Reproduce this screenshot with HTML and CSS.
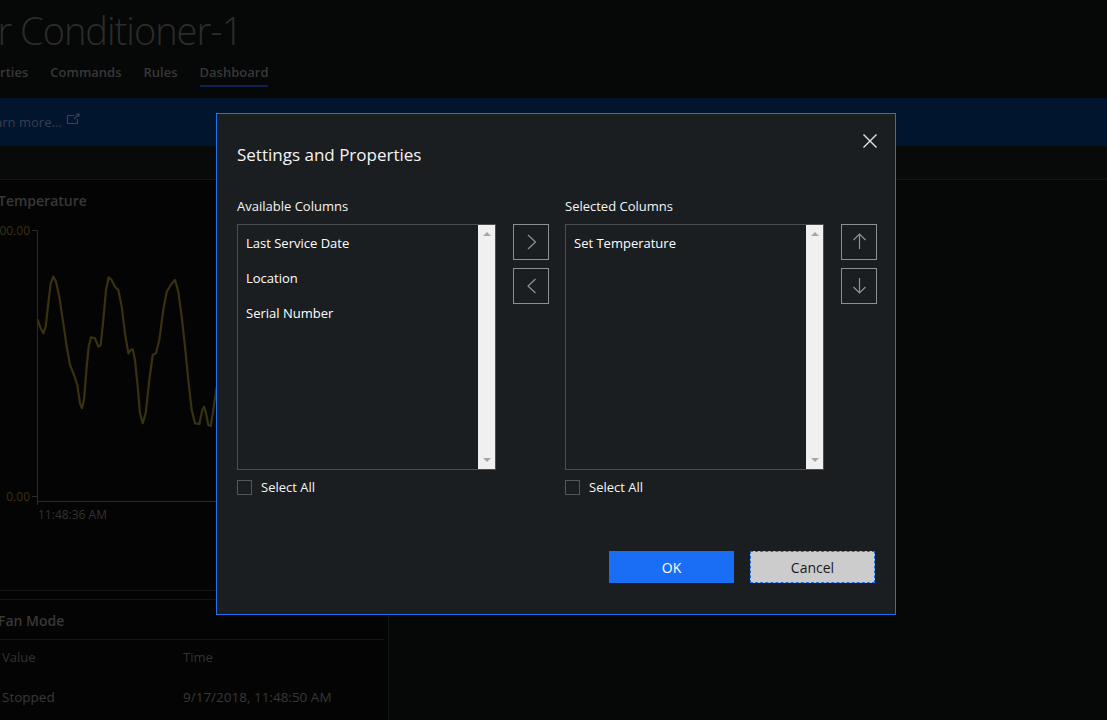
FILE: index.html
```html
<!DOCTYPE html>
<html lang="en">
<head>
<meta charset="utf-8">
<title>Air Conditioner-1 - Dashboard</title>
<link rel="stylesheet" href="styles.css">
</head>
<body>
<div class="page">
  <header class="top">
    <h1 class="device">Air Conditioner-1</h1>
    <nav class="tabs">
      <span class="tab">Properties</span>
      <span class="tab">Commands</span>
      <span class="tab">Rules</span>
      <span class="tab active">Dashboard</span>
    </nav>
  </header>
  <div class="banner">
    <span class="learn">Learn more...</span>
    <svg class="ext" width="14" height="12" viewBox="0 0 14 12"><path d="M8.5 2.5H1.5V10.5H11.5V6" fill="none" stroke="#3a404c" stroke-width="1.2"/><path d="M8 6L13 1M10 1H13V4" fill="none" stroke="#3a404c" stroke-width="1.2"/></svg>
  </div>
  <div class="toolbar"></div>
  <div class="content">
    <div class="col">
      <section class="card chart-card">
        <h2 class="card-title">Temperature</h2>
        <svg class="chart" width="388" height="310" viewBox="0 0 388 310">
          <line x1="37.5" y1="10" x2="37.5" y2="285" stroke="#2a2a2a" stroke-width="1"/>
          <line x1="37" y1="281.5" x2="388" y2="281.5" stroke="#2a2a2a" stroke-width="1"/>
          <line x1="32" y1="10.5" x2="37" y2="10.5" stroke="#2a2a2a" stroke-width="1"/>
          <line x1="32" y1="276.5" x2="37" y2="276.5" stroke="#2a2a2a" stroke-width="1"/>
          <text x="30" y="14.5" text-anchor="end" class="ylab">100.00</text>
          <text x="30" y="280.5" text-anchor="end" class="ylab">0.00</text>
          <text x="38" y="299" class="xlab">11:48:36 AM</text>
          <polyline fill="none" stroke="#3a3111" stroke-width="2.2" stroke-linejoin="round" stroke-linecap="round" points="37.7,100 40.7,108.3 43.3,113.3 45.7,106.7 48.3,83.3 50.7,63.3 53.3,56.7 56,61.7 59.3,76.7 63.3,103.3 66.7,126.7 70,145 74,155 77.3,165 80,183.3 82,188.3 84,180 86.7,146.7 88.7,126.7 91,117.3 95,118.3 98.3,126.7 100.7,125 103.3,100 106,70 108.7,57.3 111.7,60 115,66.7 118.3,70 121.7,86.7 125,113.3 128.3,133.3 130.7,130 132.7,129.3 135,140 137.7,166.7 140,193.3 142.7,203.3 145.7,193.3 149.3,160 152.7,135 156,133.3 159.3,120 163.3,90 166.7,71.7 170.7,65 175,60 178.3,71.7 181.7,96.7 185,126.7 188.3,160 191.7,190 195,203.3 199.3,204 202.3,190 204,186.7 206,193.3 208.3,205 210.7,206 213.3,190 216.7,166.7 222,140"/>
        </svg>
      </section>
      <section class="card table-card">
        <h2 class="card-title fan">Fan Mode</h2>
        <div class="trow thead"><span class="c1">Value</span><span class="c2">Time</span></div>
        <div class="trow tbody"><span class="c1">Stopped</span><span class="c2">9/17/2018, 11:48:50 AM</span></div>
      </section>
    </div>
    <div class="rest"></div>
  </div>
</div>

<div class="dialog" role="dialog" aria-label="Settings and Properties">
  <div class="dlg-head">
    <h2 class="dlg-title">Settings and Properties</h2>
    <button class="close" aria-label="Close">
      <svg width="14" height="14" viewBox="0 0 14 14"><path d="M0.5 0.5L13.5 13.5M13.5 0.5L0.5 13.5" stroke="#e6e6e6" stroke-width="1.4" fill="none"/></svg>
    </button>
  </div>
  <div class="columns">
    <div class="group">
      <div class="label">Available Columns</div>
      <div class="group-row">
        <div class="listbox">
          <ul class="items">
            <li>Last Service Date</li>
            <li>Location</li>
            <li>Serial Number</li>
          </ul>
          <div class="scrollbar"><span class="tri up"></span><span class="tri down"></span></div>
        </div>
        <div class="side-btns">
          <button class="sbtn" aria-label="Add"><svg width="36" height="34" viewBox="0 0 36 34"><path d="M14 10L21.5 17L14 24" fill="none" stroke="#8a949e" stroke-width="1.2"/></svg></button>
          <button class="sbtn" aria-label="Remove"><svg width="36" height="34" viewBox="0 0 36 34"><path d="M21.5 10L14 17L21.5 24" fill="none" stroke="#8a949e" stroke-width="1.2"/></svg></button>
        </div>
      </div>
      <label class="check"><span class="box"></span>Select All</label>
    </div>
    <div class="group">
      <div class="label">Selected Columns</div>
      <div class="group-row">
        <div class="listbox">
          <ul class="items">
            <li>Set Temperature</li>
          </ul>
          <div class="scrollbar"><span class="tri up"></span><span class="tri down"></span></div>
        </div>
        <div class="side-btns">
          <button class="sbtn" aria-label="Move up"><svg width="36" height="34" viewBox="0 0 36 34"><path d="M17.5 9V24M11.5 15L17.5 9L23.5 15" fill="none" stroke="#8a949e" stroke-width="1.2"/></svg></button>
          <button class="sbtn" aria-label="Move down"><svg width="36" height="34" viewBox="0 0 36 34"><path d="M17.5 9V24M11.5 18L17.5 24L23.5 18" fill="none" stroke="#8a949e" stroke-width="1.2"/></svg></button>
        </div>
      </div>
      <label class="check"><span class="box"></span>Select All</label>
    </div>
  </div>
  <div class="footer">
    <button class="btn ok">OK</button>
    <button class="btn cancel">Cancel</button>
  </div>
</div>
</body>
</html>
```
FILE: styles.css
```css
html, body {
  margin: 0;
  padding: 0;
}
body {
  background: #060707;
  font-family: "Open Sans", "Noto Sans", "DejaVu Sans", sans-serif;
  width: 1107px;
  height: 720px;
  overflow: hidden;
  position: relative;
}
.page {
  width: 1107px;
  height: 720px;
  display: flex;
  flex-direction: column;
  overflow: hidden;
}

/* header */
.top {
  height: 98px;
  flex: none;
  background: #060707;
  overflow: hidden;
}
.device {
  margin: 0 0 0 -32px;
  padding-top: 6px;
  font-size: 38px;
  line-height: 48px;
  font-weight: 300;
  letter-spacing: -1px;
  color: #2c2c2c;
  white-space: nowrap;
}
.tabs {
  display: flex;
  gap: 22px;
  margin: 8px 0 0 -37px;
}
.tab {
  font-size: 13px;
  font-weight: 600;
  line-height: 20px;
  color: #383838;
  padding-bottom: 3px;
  border-bottom: 2px solid transparent;
  white-space: nowrap;
}
.tab.active {
  border-bottom-color: #0b2252;
}

/* banner */
.banner {
  height: 48px;
  flex: none;
  background: #02152f;
  display: flex;
  align-items: center;
  gap: 4px;
}
.learn {
  margin-left: -19px;
  font-size: 13px;
  color: #393e48;
  white-space: nowrap;
}
.ext { margin-top: -6px; }

.toolbar {
  height: 33px;
  flex: none;
  background: #080a0a;
  border-bottom: 1px solid #151616;
}

/* content */
.content {
  flex: 1;
  display: flex;
}
.col {
  width: 388px;
  flex: none;
  background: #040404;
  border-right: 1px solid #131414;
}
.rest {
  flex: 1;
  background: #060707;
}
.card {
  background: #040404;
}
.chart-card {
  height: 410px;
  border-bottom: 1px solid #141414;
}
.card-title {
  margin: 0 0 0 -2px;
  padding-top: 11px;
  font-size: 14px;
  line-height: 20px;
  font-weight: 600;
  color: #383838;
  white-space: nowrap;
}
.chart {
  display: block;
  margin-top: 9px;
}
.ylab {
  font-family: "Open Sans", "Noto Sans", sans-serif;
  font-size: 12px;
  fill: #3a300f;
}
.xlab {
  font-family: "Open Sans", "Noto Sans", sans-serif;
  font-size: 12px;
  fill: #323232;
}
.table-card {
  margin-top: 8px;
  border-top: 1px solid #141414;
}
.card-title.fan {
  padding-bottom: 8px;
  margin-right: 4px;
  border-bottom: 1px solid #141414;
}
.trow {
  display: flex;
  white-space: nowrap;
}
.trow .c1 { width: 181px; padding-left: 2px; }
.thead {
  padding-top: 7px;
  font-size: 13px;
  line-height: 20px;
  color: #323232;
}
.tbody {
  padding-top: 20px;
  font-size: 13.5px;
  line-height: 20px;
  color: #383838;
}

/* dialog */
.dialog {
  position: absolute;
  left: 216px;
  top: 113px;
  width: 641px;
  height: 500px;
  border: 1px solid #1e6ff0;
  background: #1b1e20;
  display: flex;
  flex-direction: column;
  padding: 0 17px 0 20px;
  box-sizing: content-box;
  color: #ffffff;
}
.dlg-head {
  padding-top: 28px;
  position: relative;
}
.dlg-title {
  margin: 0;
  font-size: 17px;
  font-weight: 400;
  line-height: 26px;
  color: #f4f4f4;
}
.close {
  position: absolute;
  right: 1px;
  top: 20px;
  width: 14px;
  height: 14px;
  padding: 0;
  border: 0;
  background: none;
  display: block;
}
.close svg { display: block; }
.columns {
  display: flex;
  gap: 16px;
  margin-top: 29px;
}
.group {
  display: flex;
  flex-direction: column;
}
.label {
  font-size: 13px;
  line-height: 18px;
  color: #f4f4f4;
}
.group-row {
  display: flex;
  gap: 17px;
  margin-top: 9px;
}
.listbox {
  width: 257px;
  height: 244px;
  border: 1px solid #4c4f52;
  display: flex;
}
.items {
  list-style: none;
  margin: 0;
  padding: 1px 0 0 8px;
  flex: 1;
}
.items li {
  font-size: 13px;
  line-height: 35px;
  color: #ffffff;
  white-space: nowrap;
}
.scrollbar {
  width: 17px;
  flex: none;
  background: #f0f0f0;
  display: flex;
  flex-direction: column;
  justify-content: space-between;
  align-items: center;
  padding: 7px 0 7px;
  box-sizing: border-box;
}
.tri {
  width: 0;
  height: 0;
  border-left: 4px solid transparent;
  border-right: 4px solid transparent;
}
.tri.up { border-bottom: 4px solid #a6a6a6; }
.tri.down { border-top: 4px solid #a6a6a6; }
.side-btns {
  display: flex;
  flex-direction: column;
  gap: 8px;
}
.sbtn {
  width: 36px;
  height: 36px;
  padding: 0;
  border: 1px solid #8c8f92;
  background: transparent;
  box-sizing: border-box;
  display: block;
}
.sbtn svg { display: block; }
.check {
  display: flex;
  align-items: center;
  gap: 9px;
  margin-top: 10px;
  font-size: 13px;
  line-height: 15px;
  color: #f4f4f4;
}
.box {
  width: 13px;
  height: 13px;
  border: 1px solid #55585b;
  display: inline-block;
}
.footer {
  margin-top: auto;
  padding-bottom: 31px;
  padding-right: 3px;
  display: flex;
  justify-content: flex-end;
  gap: 16px;
}
.btn {
  width: 125px;
  height: 32px;
  font-family: "Open Sans", "Noto Sans", sans-serif;
  font-size: 14px;
  box-sizing: border-box;
  padding: 0;
}
.btn.ok {
  background: #1a6ef5;
  border: 0;
  color: #ffffff;
}
.btn.cancel {
  background: #cccccc;
  border: 1px dashed #1e6ff0;
  color: #1a1a1a;
}
```
